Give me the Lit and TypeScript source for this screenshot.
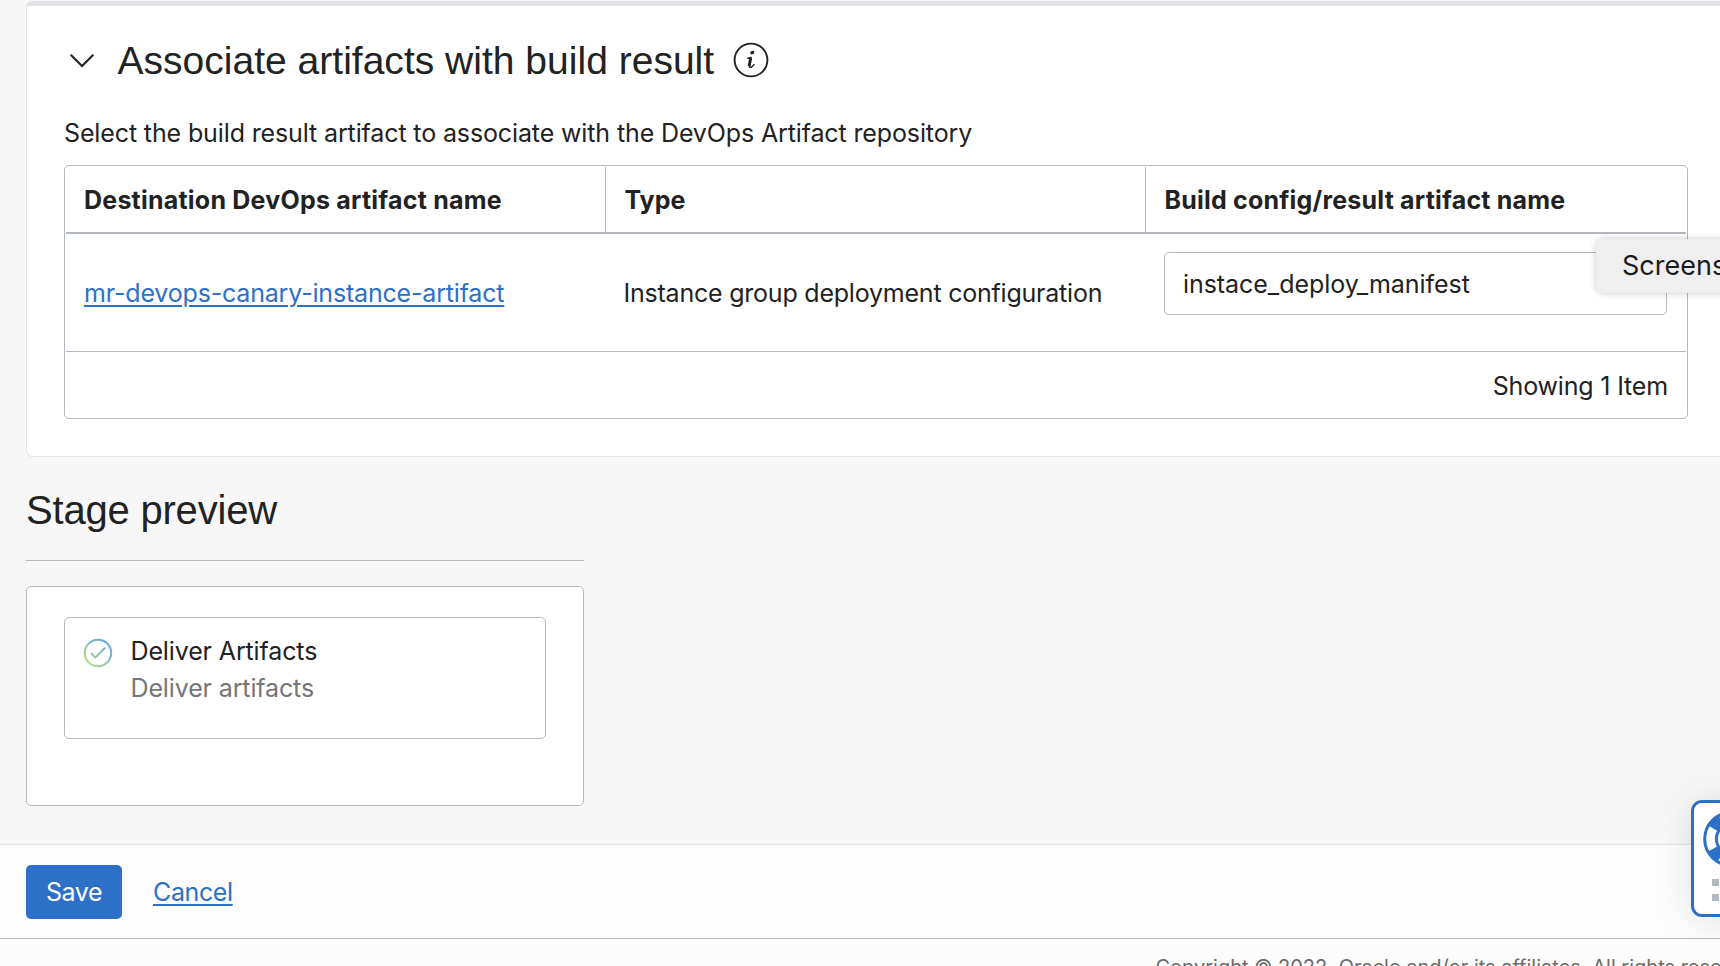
import { LitElement, html, css } from "lit";
import { customElement, property } from "lit/decorators.js";

const chevron = html`<svg class="chevron" width="24" height="16" viewBox="0 0 24 16" fill="none" stroke="#222" stroke-width="2" stroke-linecap="round"><path d="M1.2 3.3 12 14 22.8 3.3" /></svg>`;

const info = html`<svg width="36" height="36" viewBox="0 0 36 36"><circle cx="18" cy="18" r="16.4" fill="none" stroke="#222" stroke-width="1.9" /><g fill="#222"><ellipse cx="19.3" cy="10.6" rx="2.1" ry="1.7" transform="rotate(-15 19.3 10.6)" /></g><path d="M14.9 16.3 18.1 15.6Q17.4 19.6 16.4 23.3 15.9 25.9 18 25.2 19.6 24.6 21 22.6" fill="none" stroke="#222" stroke-width="1.5" stroke-linecap="round" stroke-linejoin="round" /><path d="M17.7 16 16.1 24" stroke="#222" stroke-width="2.9" /></svg>`;

const check = html`<svg class="check" width="30" height="30" viewBox="0 0 30 30" fill="none" stroke="url(#tone)" stroke-width="2">
  <defs><linearGradient id="tone" gradientUnits="userSpaceOnUse" x1="5" y1="25" x2="25" y2="5"><stop offset="0" stop-color="#a9dc7c" /><stop offset="1" stop-color="#63a6ec" /></linearGradient></defs>
  <circle cx="15" cy="15" r="13.2" /><path d="M7.8 15 12.3 19.5 22.2 9.6" /></svg>`;

const WEDGE = 20.8 * Math.PI / 2;
const buoy = html`<svg width="58" height="58" viewBox="0 0 58 58" fill="none" stroke="#2d70c8">
  <circle cx="29" cy="29" r="26.3" stroke-width="3" />
  <circle cx="29" cy="29" r="14.6" stroke-width="3" />
  <circle cx="29" cy="29" r="20.8" stroke-width="11" stroke-dasharray="${WEDGE * 0.34} ${WEDGE * 0.66}" stroke-dashoffset="${-WEDGE * 0.33}" /></svg>`;

@customElement("artifact-table")
class ArtifactTable extends LitElement {
  @property({ attribute: false }) rows = [
    { name: "mr-devops-canary-instance-artifact", type: "Instance group deployment configuration", result: "instace_deploy_manifest" },
  ];
  static styles = css`
    :host { display: block; box-sizing: border-box; width: 1624px; height: 254px; border: 1px solid #b4b8c0; border-radius: 5px; padding: 1px; }
    .row { display: grid; grid-template-columns: repeat(3, 540px); }
    .head { height: 65px; border-bottom: 2px solid #b3b8c0; font-weight: 650; letter-spacing: .22px; }
    .head div { display: flex; align-items: center; padding: 1px 0 0 18px; border-right: 1px solid #b4b8c0; }
    .head div:last-child { border-right: 0; padding-left: 18.5px; letter-spacing: .2px; }
    .head .tight { letter-spacing: 0; padding-left: 18.5px; }
    .body { height: 117px; border-bottom: 1px solid #b4b8c0; }
    .cell { display: flex; align-items: center; padding: 1px 0 0 18px; }
    .name a { color: #2d70c8; letter-spacing: -.18px; text-decoration: underline; text-decoration-thickness: 2px; text-underline-offset: 3px; }
    .type { padding-left: 17.5px; letter-spacing: -.22px; }
    .cell.field { align-items: flex-start; padding: 18px 19px 0 18px; }
    .box { box-sizing: border-box; width: 503px; height: 63px; border: 1px solid #b4b8c0; border-radius: 5px; padding: 1px 18px 0; display: flex; align-items: center; letter-spacing: -.05px; }
    .foot { height: 65px; display: flex; align-items: center; justify-content: flex-end; padding: 3px 18px 0 0; box-sizing: border-box; letter-spacing: -.17px; }
  `;
  render() {
    return html`
      <div class="row head"><div>Destination DevOps artifact name</div><div class="tight">Type</div><div>Build config/result artifact name</div></div>
      ${this.rows.map((r) => html`<div class="row body">
        <div class="cell name"><a>${r.name}</a></div>
        <div class="cell type">${r.type}</div>
        <div class="cell field"><div class="box">${r.result}</div></div>
      </div>`)}
      <div class="foot">Showing ${this.rows.length} Item</div>`;
  }
}

@customElement("app-root")
class AppRoot extends LitElement {
  static styles = css`
    :host { display: flex; flex-direction: column; box-sizing: border-box; width: 1720px; height: 966px; overflow: hidden; position: relative; background: #f7f7f7; color: #222; font: 400 25px/36px "Inter", sans-serif; padding-top: 1px; }
    .card { box-sizing: border-box; flex: none; width: 1720px; height: 456px; margin-left: 26px; background: #fff; border: 1px solid #e3e4e6; border-top: 5px solid #e0e2e6; border-radius: 6px; padding-left: 37px; }
    .title { display: flex; align-items: center; height: 54px; padding: 27px 0 0 6px; font: 400 39px/54px "Liberation Sans", sans-serif; }
    .title h2 { font: inherit; margin: 2px 18.5px 0 23.5px; letter-spacing: .015px; white-space: nowrap; }
    .hint { margin: 28px 0 14px; letter-spacing: -.125px; white-space: nowrap; }
    .preview { width: 558px; margin: 26px 0 0 26px; flex: none; }
    .preview h2 { font: 400 40px/54px "Liberation Sans", sans-serif; letter-spacing: -.2px; margin: 0; padding-bottom: 23px; border-bottom: 1px solid #b4b8c0; }
    .stages { box-sizing: border-box; height: 220px; margin-top: 25px; padding: 30px 37px; background: #fff; border: 1px solid #b4b8c0; border-radius: 5px; }
    .stage { box-sizing: border-box; height: 122px; border: 1px solid #b4b8c0; border-radius: 5px; padding: 15px 18px; display: flex; gap: 17.5px; line-height: 37px; letter-spacing: -.13px; }
    .check { margin-top: 5px; }
    .sub { color: #767676; }
    .actions { box-sizing: border-box; height: 95px; margin-top: 38px; flex: none; display: flex; gap: 31px; padding: 20px 0 0 26px; border-top: 1px solid #e3e3e3; border-bottom: 1px solid #b4b8c0; background: #fdfdfd; line-height: 54px; }
    .save { width: 96px; height: 54px; border-radius: 5px; background: #2d70c8; color: #fff; text-align: center; letter-spacing: -.45px; }
    .cancel { color: #2d70c8; letter-spacing: -.38px; text-decoration: underline; text-decoration-thickness: 2px; text-underline-offset: 3px; }
    .legal { flex: 1; min-height: 0; background: #fcfcfc; color: #6b6b6b; font-size: 20px; line-height: 30px; padding: 13px 0 0 1155.5px; white-space: nowrap; overflow: hidden; }
    .tip { position: absolute; left: 1596px; top: 239px; width: 160px; height: 54px; box-sizing: border-box; padding: 0 0 0 26px; border-radius: 7px; background: #efefef; box-shadow: 0 0 7px rgba(0,0,0,.22); font-size: 27px; line-height: 53px; color: #1c1c1c; }
    .help { position: absolute; left: 1691px; top: 800px; width: 80px; height: 117px; box-sizing: border-box; border: 3px solid #2d70c8; border-radius: 11px; background: #fff; box-shadow: 0 2px 36px rgba(0,0,0,.12); padding: 7px 0 0 8px; line-height: 0; }
    .help svg { display: block; }
    .grip { display: grid; grid-template-columns: repeat(3, 7px); gap: 8px; margin: 11px 0 0 10px; }
    .grip i { height: 7px; background: #b4bac2; }
  `;
  render() {
    return html`
      <section class="card">
        <div class="title">${chevron}<h2>Associate artifacts with build result</h2>${info}</div>
        <div class="hint">Select the build result artifact to associate with the DevOps Artifact repository</div>
        <artifact-table></artifact-table>
      </section>
      <section class="preview">
        <h2>Stage preview</h2>
        <div class="stages"><div class="stage">${check}<div><div>Deliver Artifacts</div><div class="sub">Deliver artifacts</div></div></div></div>
      </section>
      <div class="actions"><div class="save">Save</div><a class="cancel">Cancel</a></div>
      <div class="legal">Copyright © 2022, Oracle and/or its affiliates. All rights reserved.</div>
      <div class="tip">Screenshot</div>
      <div class="help">${buoy}<div class="grip">${Array.from({ length: 6 }, () => html`<i></i>`)}</div></div>`;
  }
}
